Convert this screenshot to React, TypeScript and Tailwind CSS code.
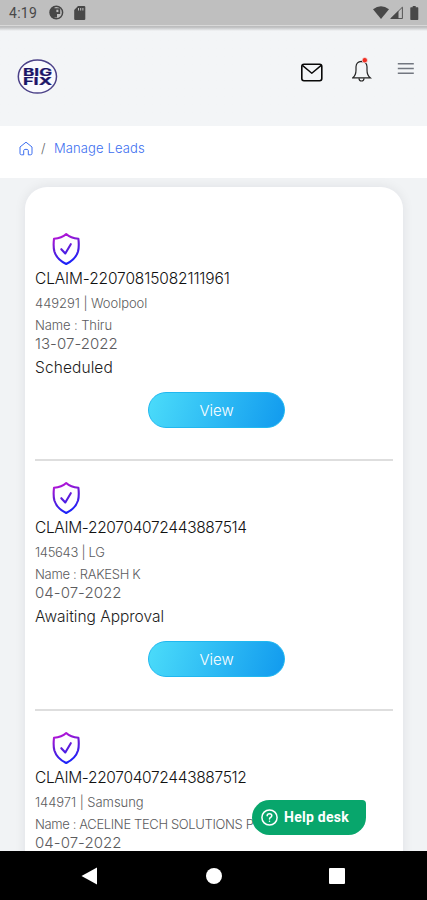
import React from "react";

type Lead = {
  claim: string;
  claimClass: string;
  product: string;
  productClass: string;
  name: string;
  nameClass: string;
  date: string;
  dateClass: string;
  status?: string;
  statusClass?: string;
};

const leads: Lead[] = [
  {
    claim: "CLAIM-22070815082111961",
    claimClass: "tracking-[-0.13px]",
    product: "449291 | Woolpool",
    productClass: "tracking-[-0.05px]",
    name: "Name : Thiru",
    nameClass: "tracking-[-0.1px]",
    date: "13-07-2022",
    dateClass: "tracking-[0.05px]",
    status: "Scheduled",
    statusClass: "tracking-[0.1px]",
  },
  {
    claim: "CLAIM-220704072443887514",
    claimClass: "tracking-[-0.33px]",
    product: "145643 | LG",
    productClass: "tracking-[-0.3px]",
    name: "Name : RAKESH K",
    nameClass: "tracking-[-0.3px]",
    date: "04-07-2022",
    dateClass: "tracking-[0.05px]",
    status: "Awaiting Approval",
    statusClass: "tracking-[0px]",
  },
  {
    claim: "CLAIM-220704072443887512",
    claimClass: "tracking-[-0.33px]",
    product: "144971 | Samsung",
    productClass: "tracking-[-0.05px]",
    name: "Name : ACELINE TECH SOLUTIONS P",
    nameClass: "tracking-[-0.36px]",
    date: "04-07-2022",
    dateClass: "tracking-[0.05px]",
  },
];

function StatusBar() {
  return (
    <div className="flex h-[26px] shrink-0 items-center justify-between border-b border-[#d8d8d8] bg-[#bfbfbf] pl-[9px] pr-[8px] text-[#484848]">
      <div className="flex items-center">
        <span className="w-[40px] font-['Roboto',sans-serif] text-[14px] leading-none tracking-[0.3px]">4:19</span>
        <svg className="block" width="15" height="15" viewBox="0 0 15 15">
          <circle cx="7.3" cy="7.5" r="6.3" fill="none" stroke="currentColor" strokeWidth="1.5" />
          <path d="M5.5 1.5V13.6A6.3 6.3 0 0 1 5.5 1.5Z" fill="currentColor" />
          <path d="M5 3.2H11.2V9H8V12.5H5Z" fill="currentColor" />
          <path d="M7.4 4.7h2v2.4h-2Z" fill="#bfbfbf" />
        </svg>
        <svg className="ml-[10px] block" width="12" height="14" viewBox="0 0 12 14">
          <path d="M4 0h6.2Q11.3 0 11.3 1.1V12.9Q11.3 14 10.2 14H1.3Q.2 14 .2 12.9V4Z" fill="currentColor" />
          <path d="M4.5 2v2.5M6.7 2v2.5M8.9 2v2.5" stroke="#bfbfbf" strokeWidth="1" />
        </svg>
      </div>
      <div className="flex items-center">
        <svg className="block" width="16" height="14" viewBox="0 0 16 14">
          <path d="M0 3.2Q8-2.8 16 3.2L8 13Z" fill="currentColor" />
        </svg>
        <svg className="ml-[1px] block" width="14" height="14" viewBox="0 0 14 14">
          <path d="M0 13L8.5 4.7V13Z" fill="currentColor" />
          <path d="M1 12.5L12.4 1.2V12.5Z" fill="none" stroke="currentColor" strokeWidth="0.9" />
        </svg>
        <svg className="ml-[6px] block" width="9" height="14" viewBox="0 0 9 14">
          <path d="M2.7 0h3v1.3h2Q8.3 1.3 8.3 2V13.3Q8.3 14 7.6 14H1Q.3 14 .3 13.3V2Q.3 1.3 1 1.3H2.7Z" fill="currentColor" />
        </svg>
      </div>
    </div>
  );
}

function Logo() {
  return (
    <svg className="block" width="42" height="36" viewBox="0 0 42 36">
      <ellipse cx="20.4" cy="18.5" rx="19.1" ry="16.6" fill="#fafafe" stroke="#4b4188" strokeWidth="1.5" />
      <g fill="#1c1468" stroke="#1c1468" strokeWidth="0.2" fontFamily="Inter, sans-serif" fontWeight="700" fontSize="10">
        <text x="6" y="17.6" textLength="29" lengthAdjust="spacingAndGlyphs">BIG</text>
        <text x="6" y="26.6" textLength="29" lengthAdjust="spacingAndGlyphs">FIX</text>
      </g>
    </svg>
  );
}

function Header() {
  return (
    <header className="flex h-[100px] shrink-0 items-start justify-between bg-linear-to-b from-[#bcbdbe] from-[1px] to-[#f3f5f7] to-[5px] pl-[17px] pr-[13px] pt-[29px]">
      <div className="pt-[3px]">
        <Logo />
      </div>
      <div className="flex items-start">
        <svg className="mt-[8px] block" width="23" height="19" viewBox="0 0 23 19" fill="none" stroke="#080808" strokeLinejoin="round">
          <rect x="1.8" y="1.2" width="20" height="16.5" rx="2.2" strokeWidth="1.6" />
          <path d="M2.4 2.4L11.8 10.2L21.2 2.4" strokeWidth="1.4" />
        </svg>
        <svg className="ml-[29px] mt-[2px] block" width="20" height="25" viewBox="0 0 20 25" fill="none" stroke="#252525" strokeWidth="1.2">
          <path d="M.8 20.8Q4 18.4 4 13V9.7Q4.3 4.7 9.4 4.4Q14.8 4.7 15 9.7V13Q15 18.4 18.2 20.8Z" />
          <path d="M7 21.2Q7 24 9.5 24T12 21.2" />
          <circle cx="12.8" cy="3.2" r="2.7" fill="#f02e22" stroke="#f3f5f7" strokeWidth="0.7" />
        </svg>
        <svg className="ml-[25px] mt-[7px] block" width="17" height="13" viewBox="0 0 17 13" fill="none" stroke="#727780" strokeWidth="1.4">
          <path d="M.8 1.8h16M.8 6.5h16M.8 11.3h16" />
        </svg>
      </div>
    </header>
  );
}

function Shield({ id }: { id: string }) {
  return (
    <svg className="ml-[17px] block" width="30" height="34" viewBox="0 0 30 34" fill="none" stroke={`url(#${id})`} strokeWidth="2.1" strokeLinejoin="round" strokeLinecap="round">
      <defs>
        <linearGradient id={id} x1="8" y1="0" x2="19" y2="33" gradientUnits="userSpaceOnUse">
          <stop offset="0" stopColor="#c614d6" />
          <stop offset="0.45" stopColor="#661bd8" />
          <stop offset="1" stopColor="#0f23ff" />
        </linearGradient>
      </defs>
      <path d="M14.2 2Q18.6 6 26.4 6.8Q27.3 14.5 26 19.5Q23.6 27.5 14.2 32Q4.8 27.5 2.4 19.5Q1.1 14.5 2 6.8Q9.8 6 14.2 2Z" />
      <path d="M9.3 17.2L13.3 21.5L18.8 12.2" />
    </svg>
  );
}

function LeadItem({ lead, id }: { lead: Lead; id: string }) {
  return (
    <article className="flex h-[249.3px] shrink-0 flex-col whitespace-nowrap border-b-2 border-[#dedede] pt-[20px] text-[#5b5b5d]">
      <Shield id={id} />
      <h2 className={`mt-[1px] h-[24px] text-[15.5px] font-light leading-[24px] text-[#111] ${lead.claimClass}`}>{lead.claim}</h2>
      <p className={`h-[24px] text-[13px] font-light leading-[24px] ${lead.productClass}`}>{lead.product}</p>
      <p className={`h-[20px] text-[13px] font-light leading-[20px] ${lead.nameClass}`}>{lead.name}</p>
      <p className={`h-[17px] text-[15px] font-light leading-[17px] ${lead.dateClass}`}>{lead.date}</p>
      {lead.status && (
        <>
          <p className={`h-[30px] text-[15.5px] font-light leading-[32px] text-[#1c1c1c] ${lead.statusClass}`}>{lead.status}</p>
          <button className="ml-[113px] mt-[10px] h-[36px] w-[137px] shrink-0 rounded-full border border-[#20b8f0] bg-linear-[108deg] from-[#4bdcfa] to-[#119aee] pt-[2px] text-[15px] font-light text-white">View</button>
        </>
      )}
    </article>
  );
}

export default function App() {
  return (
    <div className="relative flex h-[900px] w-[427px] flex-col overflow-hidden bg-[#f1f3f5] font-['Inter','Liberation_Sans',sans-serif]">
      <StatusBar />
      <Header />
      <nav className="flex h-[52px] shrink-0 items-center bg-white pb-[6px] pl-[19px] text-[13px] font-light text-[#3d6ff0]">
        <svg className="mb-[2px] block" width="14" height="15" viewBox="0 0 14 15" fill="none" stroke="currentColor" strokeWidth="1" strokeLinejoin="round">
          <path d="M1 6L7 1.2L13 6V12.3Q13 13.8 11.5 13.8H9.3V9.5Q9.3 8.3 7 8.3T4.7 9.5V13.8H2.5Q1 13.8 1 12.3Z" />
        </svg>
        <span className="ml-[8px] w-[13px] text-[#666]">/</span>
        <span className="tracking-[0.12px]">Manage Leads</span>
      </nav>
      <main className="flex min-h-0 flex-1 flex-col overflow-hidden pl-[25px] pr-[24px] pt-[9px]">
        <section className="h-[900px] shrink-0 rounded-t-[22px] bg-white px-[10px] pt-[25px] shadow-[0_0_12px_rgba(20,25,35,0.08)]">
          {leads.map((lead, i) => (
            <LeadItem key={lead.claim} lead={lead} id={`shield-${i}`} />
          ))}
        </section>
      </main>
      <footer className="flex h-[49px] shrink-0 items-center bg-black pl-[81px]">
        <svg className="block" width="17" height="18" viewBox="0 0 17 18"><path d="M.5 9L16 .5V17.5Z" fill="#fff" /></svg>
        <span className="ml-[108px] block size-[16px] rounded-full bg-white" />
        <span className="ml-[107px] block size-[16px] rounded-[1px] bg-white" />
      </footer>
      <button className="absolute left-[252px] top-[800px] flex h-[35px] w-[114px] items-center rounded-[18px] rounded-tr-[4px] bg-[#08a66c] pl-[9px] font-['Roboto',sans-serif] text-[14px] font-bold text-white">
        <svg className="block" width="17" height="17" viewBox="0 0 17 17" fill="none" stroke="currentColor" strokeWidth="1.5" strokeLinecap="round">
          <circle cx="8.5" cy="8.5" r="7.6" />
          <path d="M6.2 6.8Q6.2 4.8 8.5 4.8T10.8 6.8Q10.8 7.8 9.5 8.5Q8.5 9 8.5 10M8.5 12.2v.1" />
        </svg>
        <span className="ml-[6px] whitespace-nowrap pb-px tracking-[0.25px]">Help desk</span>
      </button>
    </div>
  );
}
